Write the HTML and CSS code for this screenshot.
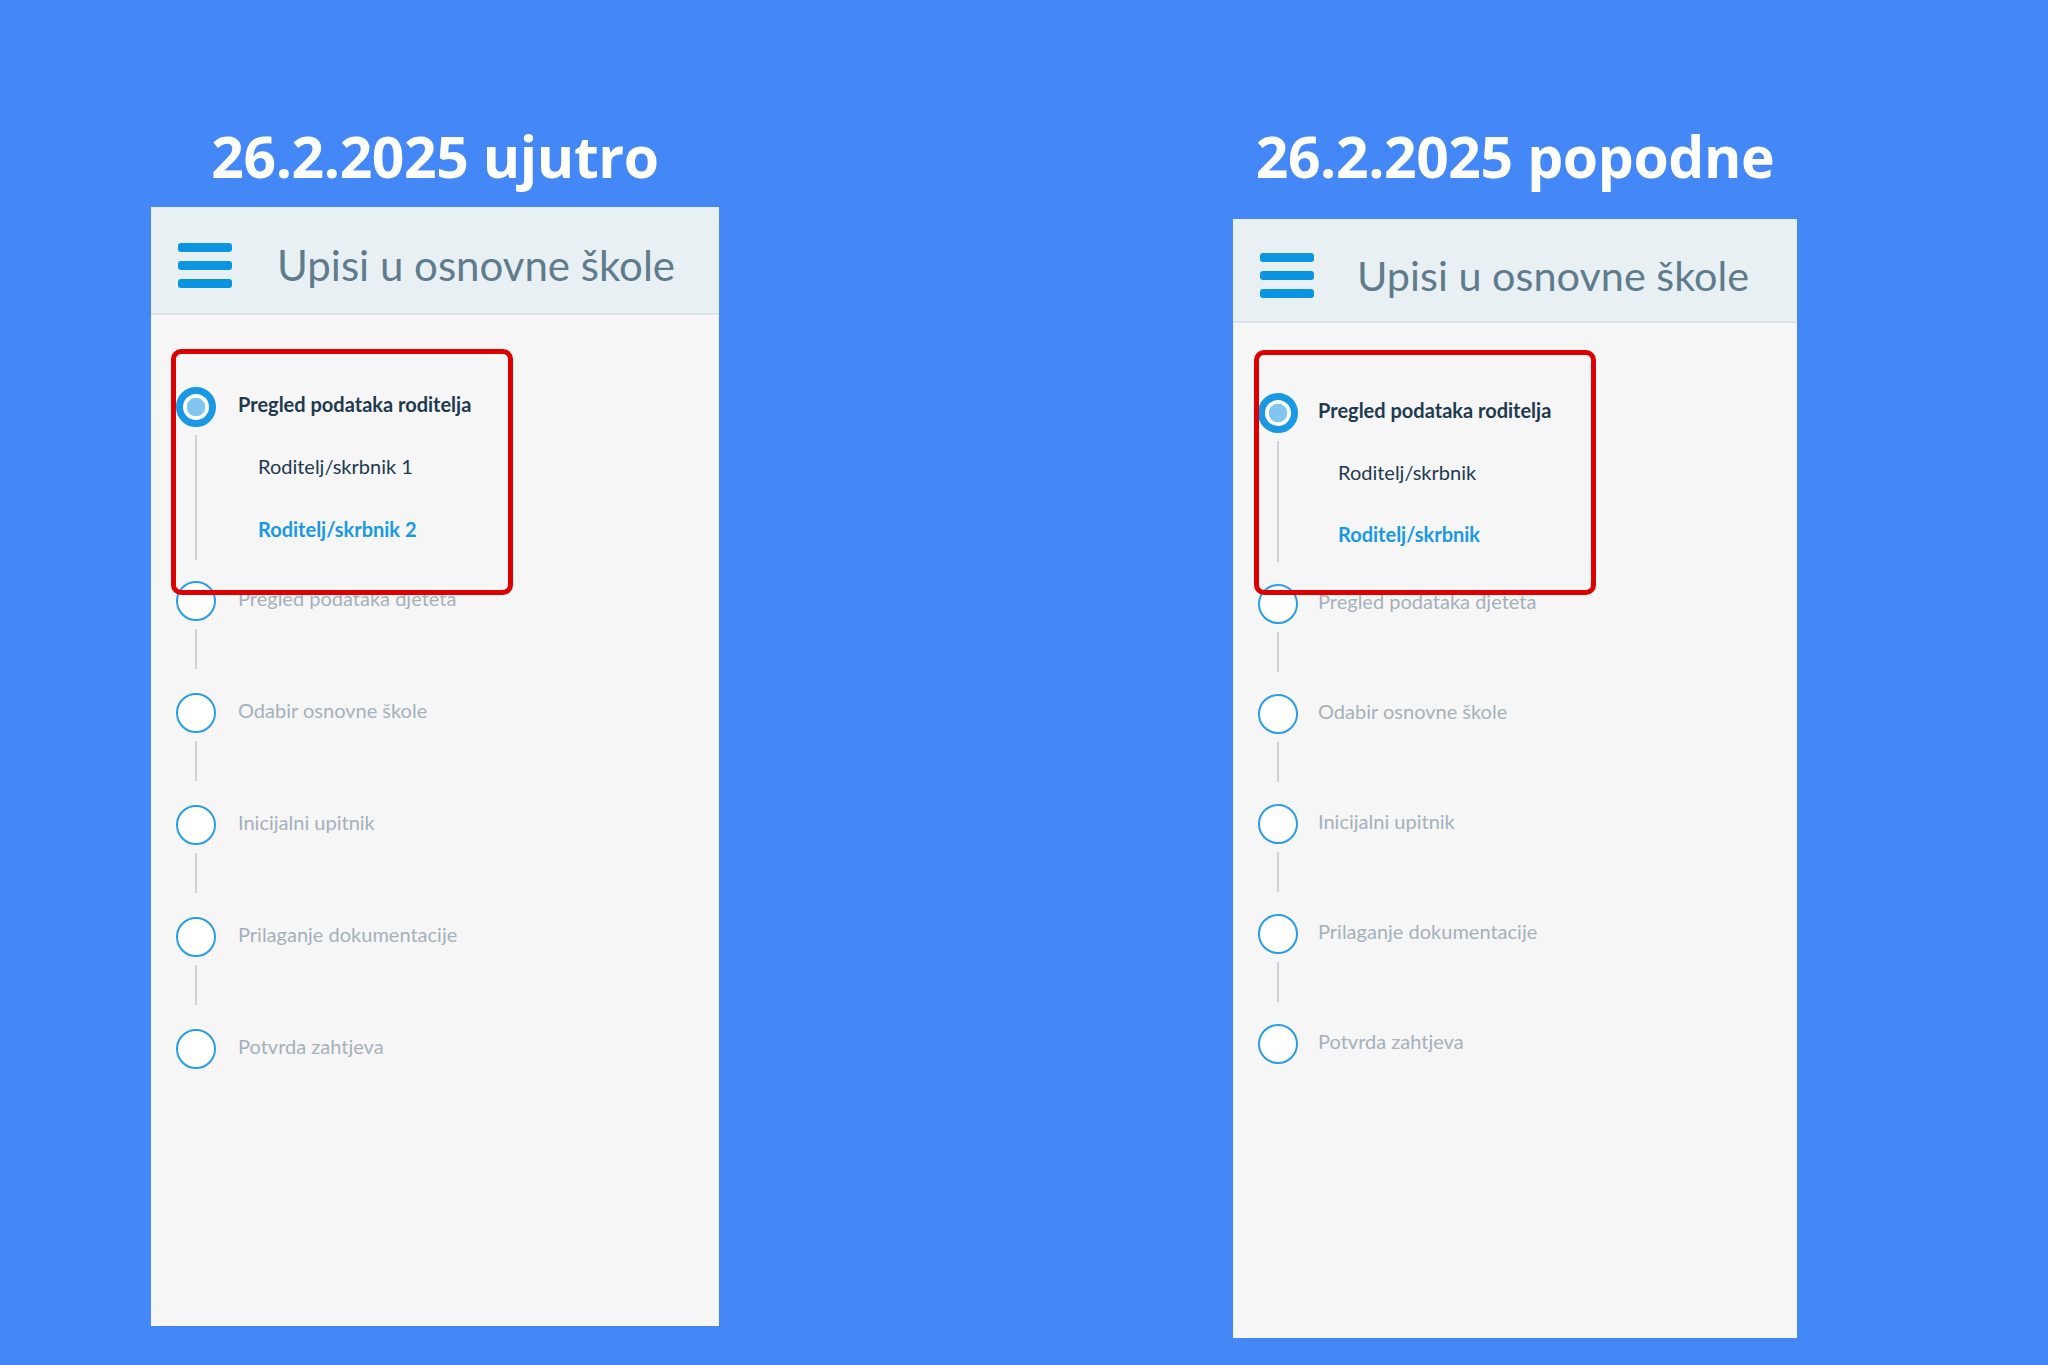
FILE: index.html
```html
<!DOCTYPE html>
<html>
  <head>
    <title>Upisi u osnovne škole</title>
    <link rel="stylesheet" href="styles.css">
  </head>

  <body>
    <div class="board">
      <div class="column">
        <h1 class="day-title">26.2.2025 ujutro</h1>
        <div class="panel">
          <div class="panel-header">
            <div class="hamburger"><span></span><span></span><span></span></div>
            <div class="panel-title">Upisi u osnovne škole</div>
          </div>
          <div class="steps">
            <div class="step step--active">
              <div class="step-head"><span class="dot"></span><span class="label">Pregled podataka roditelja</span></div>
              <div class="rail rail--subs">
                <div class="substep">Roditelj/skrbnik 1</div>
                <div class="substep substep--current">Roditelj/skrbnik 2</div>
              </div>
            </div>
            <div class="step">
              <div class="step-head"><span class="dot"></span><span class="label">Pregled podataka djeteta</span></div>
              <div class="rail"></div>
            </div>
            <div class="step">
              <div class="step-head"><span class="dot"></span><span class="label">Odabir osnovne škole</span></div>
              <div class="rail"></div>
            </div>
            <div class="step">
              <div class="step-head"><span class="dot"></span><span class="label">Inicijalni upitnik</span></div>
              <div class="rail"></div>
            </div>
            <div class="step">
              <div class="step-head"><span class="dot"></span><span class="label">Prilaganje dokumentacije</span></div>
              <div class="rail"></div>
            </div>
            <div class="step">
              <div class="step-head"><span class="dot"></span><span class="label">Potvrda zahtjeva</span></div>
            </div>
          </div>
          <div class="mark"></div>
        </div>
      </div>

      <div class="column column--pm">
        <h1 class="day-title">26.2.2025 popodne</h1>
        <div class="panel">
          <div class="panel-header">
            <div class="hamburger"><span></span><span></span><span></span></div>
            <div class="panel-title">Upisi u osnovne škole</div>
          </div>
          <div class="steps">
            <div class="step step--active">
              <div class="step-head"><span class="dot"></span><span class="label">Pregled podataka roditelja</span></div>
              <div class="rail rail--subs">
                <div class="substep">Roditelj/skrbnik</div>
                <div class="substep substep--current">Roditelj/skrbnik</div>
              </div>
            </div>
            <div class="step">
              <div class="step-head"><span class="dot"></span><span class="label">Pregled podataka djeteta</span></div>
              <div class="rail"></div>
            </div>
            <div class="step">
              <div class="step-head"><span class="dot"></span><span class="label">Odabir osnovne škole</span></div>
              <div class="rail"></div>
            </div>
            <div class="step">
              <div class="step-head"><span class="dot"></span><span class="label">Inicijalni upitnik</span></div>
              <div class="rail"></div>
            </div>
            <div class="step">
              <div class="step-head"><span class="dot"></span><span class="label">Prilaganje dokumentacije</span></div>
              <div class="rail"></div>
            </div>
            <div class="step">
              <div class="step-head"><span class="dot"></span><span class="label">Potvrda zahtjeva</span></div>
            </div>
          </div>
          <div class="mark"></div>
        </div>
      </div>
    </div>
  </body>
</html>
```

FILE: styles.css
```css
* {
  box-sizing: border-box;
}

body {
  margin: 0;
  background-color: #4487f6;
  font-family: Lato, "Liberation Sans", sans-serif;
}

.board {
  display: flex;
  justify-content: space-between;
  height: 1365px;
  padding: 126px 251px 0 151px;
}

.column {
  display: flex;
  flex-direction: column;
  width: 568px;
}

.column--pm {
  width: 564px;
}

.day-title {
  margin: 0 0 21px;
  font-family: "Open Sans", sans-serif;
  font-weight: 700;
  font-size: 57px;
  line-height: 60px;
  letter-spacing: -0.4px;
  color: white;
  text-align: center;
}

.column--pm .day-title {
  margin-bottom: 33px;
}

.panel {
  position: relative;
  height: 1119px;
  background-color: #f6f6f6;
}

.panel-header {
  display: flex;
  align-items: center;
  height: 108px;
  padding: 10px 0 0 27px;
  background-color: #e9f0f4;
  border-bottom: 2px solid #dce3e7;
}

.column--pm .panel-header {
  height: 104px;
}

.hamburger {
  display: flex;
  flex-direction: column;
  gap: 9px;
  width: 54px;
}

.hamburger span {
  height: 9px;
  border-radius: 3px;
  background-color: #0b94e2;
}

.panel-title {
  margin-left: 45px;
  font-size: 42px;
  color: #5f7c8d;
}

.column--pm .panel-title {
  margin-left: 43px;
  font-size: 41.4px;
}

.steps {
  padding: 72px 0 0 25px;
}

.column--pm .steps {
  padding-top: 70px;
}

.step-head {
  display: flex;
  align-items: center;
  height: 40px;
}

.dot {
  flex: none;
  width: 40px;
  height: 40px;
  border: 2px solid #2a9ce8;
  border-radius: 50%;
  background-color: white;
}

.step--active .dot {
  border: 7px solid #1a98e3;
  background: radial-gradient(circle, #80c6f0 0 9px, #fff 9.5px);
}

.label {
  margin: 0 0 6px 22px;
  font-size: 20px;
  color: #a4b1bb;
}

.column--pm .label {
  margin-left: 20px;
}

.step--active .label {
  font-weight: 700;
  color: #1e3a4f;
}

.rail {
  height: 40px;
  margin: 8px 0 24px 19px;
  border-left: 2px solid #ccd3d8;
}

.rail--subs {
  height: 125px;
  margin-bottom: 21px;
  padding-left: 61px;
}

.column--pm .rail {
  margin-bottom: 22px;
}

.column--pm .rail--subs {
  height: 121px;
  padding-left: 59px;
}

.substep {
  font-size: 20px;
  line-height: 63px;
  color: #1e3a4f;
}

.column--pm .substep {
  line-height: 62px;
}

.substep--current {
  font-weight: 700;
  color: #1a98e3;
}

.mark {
  position: absolute;
  left: 20px;
  top: 142px;
  width: 342px;
  height: 246px;
  border: 5px solid #dd0000;
  border-radius: 10px;
}

.column--pm .mark {
  left: 21px;
  top: 131px;
  height: 245px;
}
```
